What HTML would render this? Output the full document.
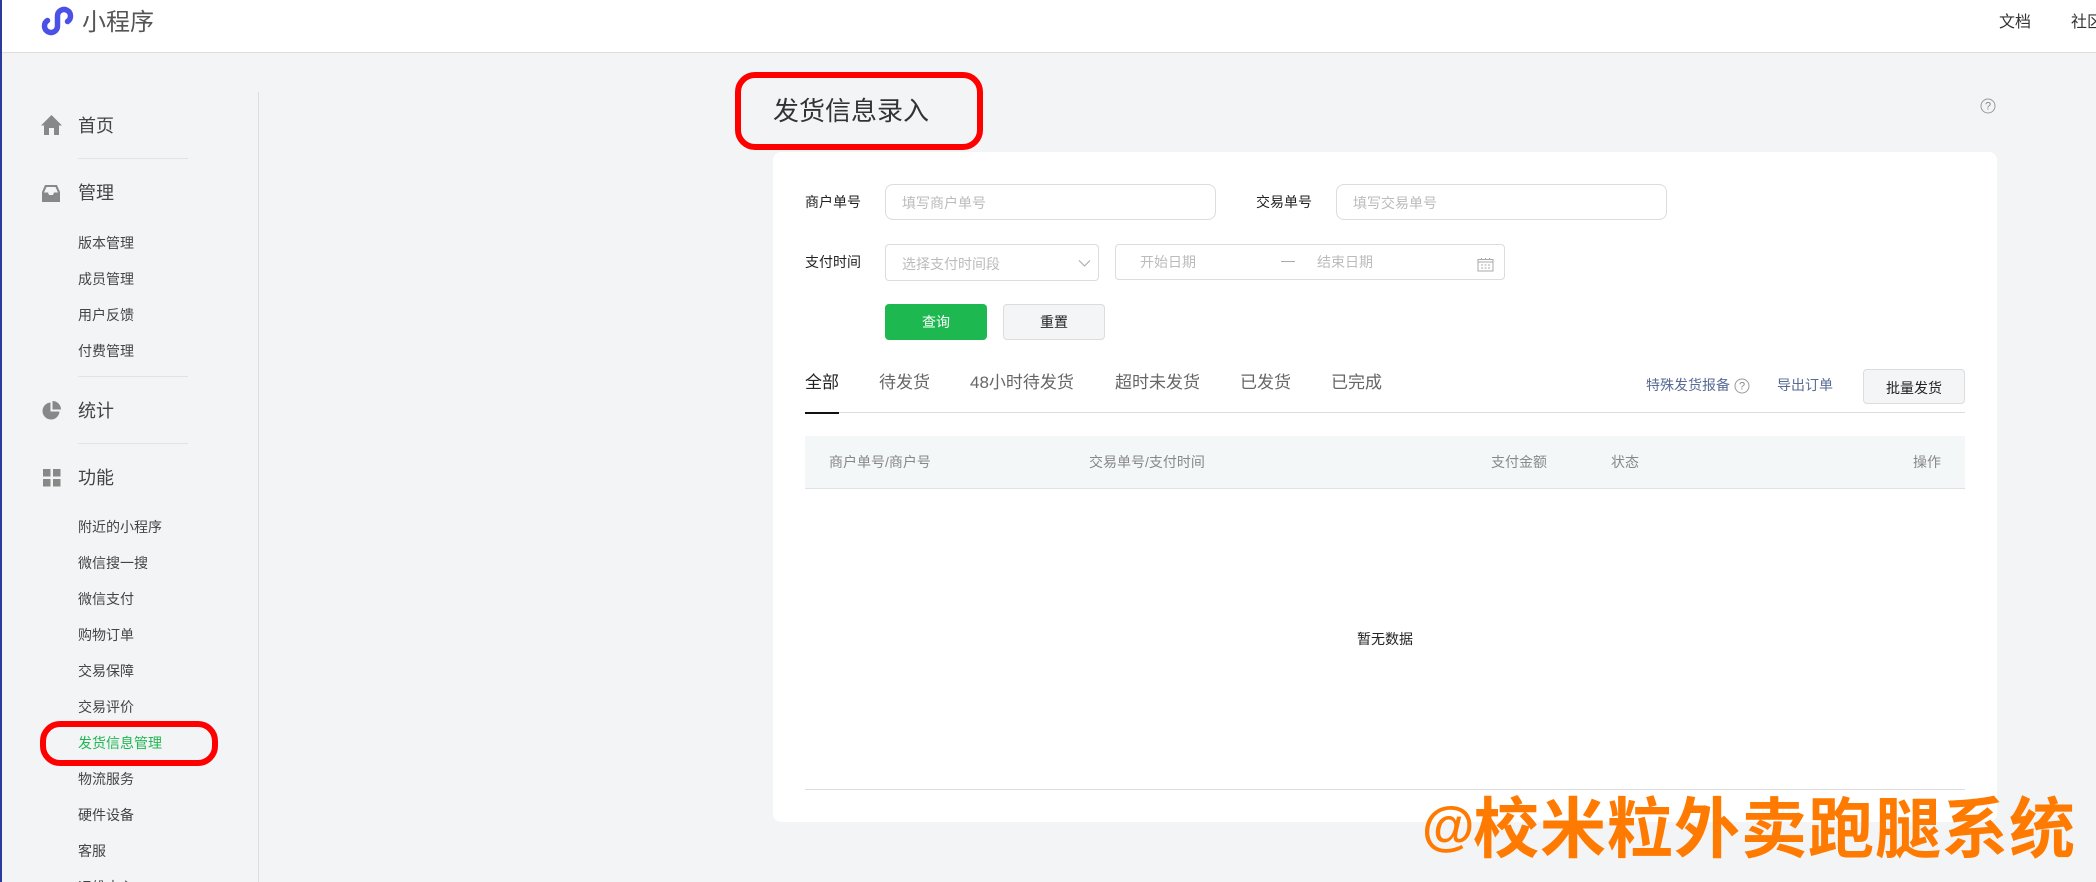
<!DOCTYPE html>
<html lang="zh-CN">
<head>
<meta charset="utf-8">
<title>发货信息录入</title>
<style>
html,body{margin:0;padding:0;width:2096px;height:882px;overflow:hidden;background:#f3f4f6}
body{position:relative;font-family:"Liberation Sans","Noto Sans CJK SC",sans-serif;color:#333}
.a{position:absolute;box-sizing:border-box}
.t{position:absolute;white-space:nowrap;height:24px;line-height:24px;margin-top:-12px}
.h{font-size:18px;color:#444;left:78px}
.s{font-size:14px;color:#444;left:78px}
.d{position:absolute;left:78px;width:110px;height:1px;background:#e2e3e5}
.l{font-size:14px;color:#222}
.p{font-size:14px;color:#bbb}
.tab{font-size:17px;color:#666}
.th{font-size:14px;color:#888}
.lk{font-size:14px;color:#576b95}
.in{position:absolute;box-sizing:border-box;background:#fff;border:1px solid #dcdcdc}
.btn{position:absolute;box-sizing:border-box;text-align:center;font-size:14px;border-radius:4px}
.red{position:absolute;box-sizing:border-box;border:6px solid #fe0000;border-radius:20px}
</style>
</head>
<body>
<div class="a" style="left:0;top:0;width:2096px;height:53px;background:#fff;border-bottom:1px solid #dcdddf"></div>
<svg class="a" style="left:0;top:0" width="100" height="50" viewBox="0 0 100 50"><path d="M47.500 20.500A6.500 6.500 0 1 0 57.500 26V16A6.500 6.500 0 1 1 67.500 21.500" fill="none" stroke="#4b50e6" stroke-width="5.500" stroke-linecap="round"/></svg>
<span class="t" style="left:82px;top:22.500px;font-size:24px;color:#555">小程序</span>
<span class="t" style="left:1999px;top:23px;font-size:16px;color:#333">文档</span>
<span class="t" style="left:2071px;top:23px;font-size:16px;color:#333">社区</span>

<div class="a" style="left:258px;top:92px;width:1px;height:790px;background:#dcdde0"></div>

<svg class="a" style="left:40px;top:114px" width="23" height="22" viewBox="0 0 23 22"><path d="M11.500 1 L22 11.500 H19 V21 H14 V14 H9 V21 H4 V11.500 H1Z" fill="#888"/></svg>
<span class="t h" style="top:126px">首页</span>
<div class="d" style="top:158px"></div>
<svg class="a" style="left:41px;top:184px" width="20" height="20" viewBox="0 0 20 20"><path d="M4 1H16L19 8V18H1V8ZM5.500 3L3 8.500H7L8 11H12L13 8.500H17L14.500 3Z" fill="#888" fill-rule="evenodd"/></svg>
<span class="t h" style="top:193px">管理</span>
<span class="t s" style="top:243px">版本管理</span>
<span class="t s" style="top:279px">成员管理</span>
<span class="t s" style="top:315px">用户反馈</span>
<span class="t s" style="top:351px">付费管理</span>
<div class="d" style="top:376px"></div>
<svg class="a" style="left:41px;top:400px" width="21" height="21" viewBox="0 0 21 21"><path d="M9.500 2.500A8.500 8.500 0 1 0 18.500 11.500H9.500Z" fill="#888"/><path d="M11.500 1V9.500H20A8.500 8.500 0 0 0 11.500 1Z" fill="#888"/></svg>
<span class="t h" style="top:411px">统计</span>
<div class="d" style="top:443px"></div>
<svg class="a" style="left:43px;top:469px" width="18" height="18" viewBox="0 0 18 18"><path d="M0 0H7.500V7.500H0ZM10 0H17.500V7.500H10ZM0 10H7.500V17.500H0ZM10 10H17.500V17.500H10Z" fill="#888"/></svg>
<span class="t h" style="top:478px">功能</span>
<span class="t s" style="top:527px">附近的小程序</span>
<span class="t s" style="top:563px">微信搜一搜</span>
<span class="t s" style="top:599px">微信支付</span>
<span class="t s" style="top:635px">购物订单</span>
<span class="t s" style="top:671px">交易保障</span>
<span class="t s" style="top:707px">交易评价</span>
<span class="t s" style="top:743px;color:#1fb751">发货信息管理</span>
<span class="t s" style="top:779px">物流服务</span>
<span class="t s" style="top:815px">硬件设备</span>
<span class="t s" style="top:851px">客服</span>
<span class="t s" style="top:887px">运维中心</span>
<div class="red" style="left:40px;top:721px;width:178px;height:45px"></div>

<span class="t" style="left:773px;top:111px;font-size:26px;color:#333">发货信息录入</span>
<div class="red" style="left:735px;top:72px;width:248px;height:78px"></div>
<svg class="a" style="left:1980px;top:98px" width="16" height="16" viewBox="0 0 16 16"><circle cx="8" cy="8" r="7" fill="none" stroke="#999" stroke-width="1"/><text x="8" y="11.500" font-size="11" text-anchor="middle" fill="#888" font-family="Liberation Sans">?</text></svg>

<div class="a" style="left:773px;top:152px;width:1224px;height:670px;background:#fff;border-radius:8px"></div>

<span class="t l" style="left:805px;top:202px">商户单号</span>
<div class="in" style="left:885px;top:184px;width:331px;height:36px;border-radius:8px"></div>
<span class="t p" style="left:902px;top:203px">填写商户单号</span>
<span class="t l" style="left:1256px;top:202px">交易单号</span>
<div class="in" style="left:1336px;top:184px;width:331px;height:36px;border-radius:8px"></div>
<span class="t p" style="left:1353px;top:203px">填写交易单号</span>

<span class="t l" style="left:805px;top:262px">支付时间</span>
<div class="in" style="left:885px;top:244px;width:214px;height:37px;border-radius:4px"></div>
<span class="t p" style="left:902px;top:264px">选择支付时间段</span>
<svg class="a" style="left:1078px;top:259px" width="13" height="8" viewBox="0 0 13 8"><path d="M1 1.500L6.500 7L12 1.500" fill="none" stroke="#aaa" stroke-width="1.100"/></svg>
<div class="in" style="left:1115px;top:244px;width:390px;height:36px;border-radius:4px"></div>
<span class="t p" style="left:1140px;top:262px">开始日期</span>
<div class="a" style="left:1281px;top:261px;width:14px;height:1px;background:#aaa"></div>
<span class="t p" style="left:1317px;top:262px">结束日期</span>
<svg class="a" style="left:1477px;top:257px" width="17" height="15" viewBox="0 0 17 15"><rect x="1" y="2.500" width="15" height="11.500" fill="none" stroke="#aaa" stroke-width="1"/><path d="M1 5H16" stroke="#aaa" stroke-width="1"/><path d="M4.500 1V3M8.500 1V3M12.500 1V3M4 8H6M7.500 8H9.500M11 8H13M4 11H6M7.500 11H9.500M11 11H13" stroke="#aaa" stroke-width="1"/></svg>

<div class="btn" style="left:885px;top:304px;width:102px;height:36px;line-height:36px;background:#1db84f;color:#fff">查询</div>
<div class="btn" style="left:1003px;top:304px;width:102px;height:36px;line-height:35px;background:#f4f5f7;border:1px solid #dcdcdc;color:#222">重置</div>

<span class="t tab" style="left:805px;top:383px;color:#222">全部</span>
<span class="t tab" style="left:879px;top:383px">待发货</span>
<span class="t tab" style="left:970px;top:383px">48小时待发货</span>
<span class="t tab" style="left:1115px;top:383px">超时未发货</span>
<span class="t tab" style="left:1240px;top:383px">已发货</span>
<span class="t tab" style="left:1331px;top:383px">已完成</span>
<div class="a" style="left:805px;top:412px;width:1160px;height:1px;background:#dddddf"></div>
<div class="a" style="left:805px;top:412px;width:34px;height:2px;background:#111"></div>

<span class="t lk" style="left:1646px;top:385px">特殊发货报备</span>
<svg class="a" style="left:1734px;top:378px" width="16" height="16" viewBox="0 0 16 16"><circle cx="8" cy="8" r="7" fill="none" stroke="#999" stroke-width="1"/><text x="8" y="11.500" font-size="11" text-anchor="middle" fill="#888" font-family="Liberation Sans">?</text></svg>
<span class="t lk" style="left:1777px;top:385px">导出订单</span>
<div class="btn" style="left:1863px;top:369px;width:102px;height:35px;line-height:36px;background:#f4f5f7;border:1px solid #dcdcdc;color:#222">批量发货</div>

<div class="a" style="left:805px;top:436px;width:1160px;height:53px;background:#f4f7f8;border-bottom:1px solid #dfe1e3"></div>
<span class="t th" style="left:829px;top:462px">商户单号/商户号</span>
<span class="t th" style="left:1089px;top:462px">交易单号/支付时间</span>
<span class="t th" style="left:1491px;top:462px">支付金额</span>
<span class="t th" style="left:1611px;top:462px">状态</span>
<span class="t th" style="left:1913px;top:462px">操作</span>

<span class="t" style="left:1357px;top:639px;font-size:14px;color:#222">暂无数据</span>
<div class="a" style="left:805px;top:789px;width:1160px;height:1px;background:#dddddf"></div>

<div class="a" style="left:0;top:0;width:2px;height:882px;background:#2a3b9e"></div>

<div class="a" style="left:1421px;top:782px;height:90px;line-height:90px;font-size:54px;font-weight:700;font-style:italic;color:#ff7a00;white-space:nowrap">@</div>
<div class="a" style="left:1473px;top:789px;height:80px;line-height:80px;font-size:66px;font-weight:700;color:#ff7a00;letter-spacing:1px;white-space:nowrap">校米粒外卖跑腿系统</div>
</body>
</html>
